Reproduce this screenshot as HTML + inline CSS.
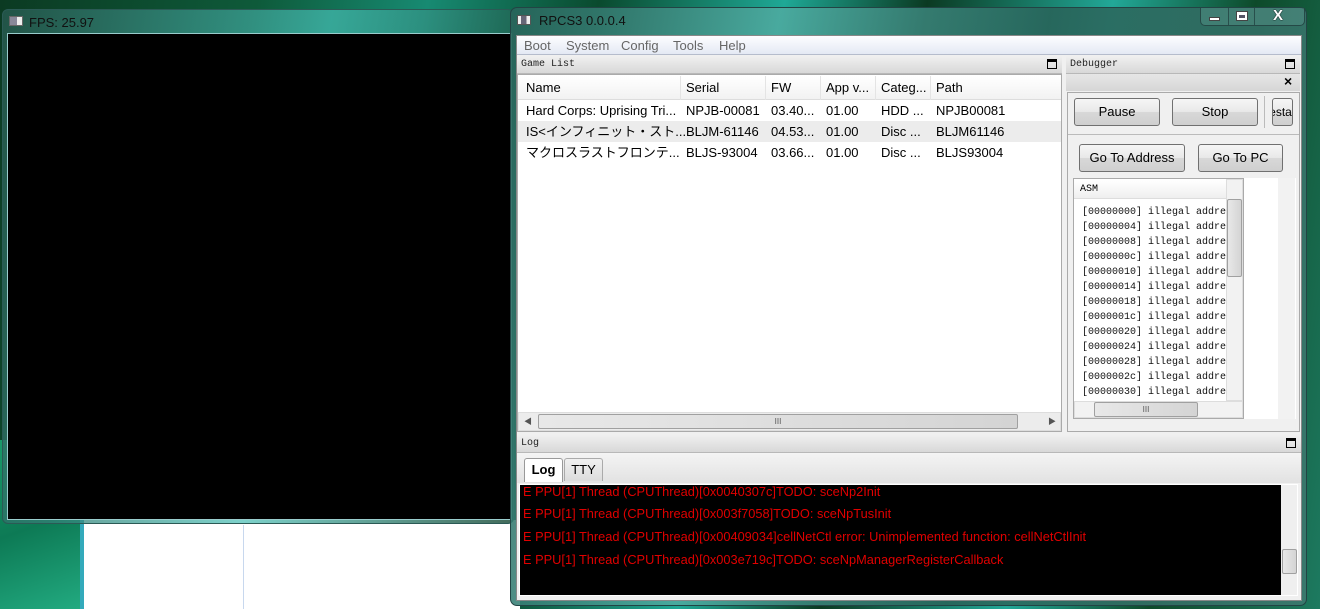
<!DOCTYPE html>
<html><head><meta charset="utf-8"><style>
*{box-sizing:border-box;margin:0;padding:0}
body{width:1320px;height:609px;overflow:hidden;position:relative;font-family:"Liberation Sans","Noto Sans CJK JP",sans-serif;font-size:13px;color:#000;
background:linear-gradient(100deg,#0b3a22 0%,#0e5a3a 18%,#178a72 30%,#0a4a2e 42%,#1fa896 55%,#0b3a22 65%,#22a898 78%,#0e4a2a 88%,#1d7a60 100%)}
.abs{position:absolute}
.dockhdr{background:linear-gradient(#f0f0f0,#d8d8d8);border-bottom:1px solid #b8b8b8;font-family:"Liberation Mono",monospace;font-size:10px;line-height:17px;padding-left:4px;color:#222}
.flt{position:absolute;right:5px;top:3px;width:10px;height:10px;border:1px solid #000;border-top-width:3px}
.btn{position:absolute;border:1px solid #707070;border-radius:3px;background:linear-gradient(#f6f6f6 0%,#e8e8e8 50%,#d8d8d8 51%,#cfcfcf 100%);text-align:center;font-size:13px}
.sb{position:absolute;background:#ececec;border:1px solid #ddd}
.thumb{position:absolute;background:linear-gradient(90deg,#e8e8e8,#d4d4d4);border:1px solid #a0a0a0;border-radius:2px}
.row{position:absolute;left:0;width:540px;height:21px;line-height:21px}
.row span{position:absolute;white-space:nowrap}
.asm{position:absolute;left:8px;font-family:"Liberation Mono","DejaVu Sans Mono",monospace;font-size:10px;white-space:nowrap;line-height:15px;color:#111}
.log{position:absolute;left:3px;color:#e00000;font-size:12.8px;white-space:nowrap}
</style></head><body>
<div class="abs" style="left:80px;top:520px;width:440px;height:89px;background:#fff;border-left:4px solid #3ab;"></div>
<div class="abs" style="left:243px;top:525px;width:1px;height:84px;background:#c8d8ee"></div>
<div class="abs" style="left:0;top:440px;width:80px;height:169px;background:linear-gradient(160deg,#1a9a6a,#0d7a55 50%,#22aa80)"></div>

<div class="abs" style="left:2px;top:9px;width:512px;height:515px;border:1px solid #2b5a55;border-radius:6px;background:linear-gradient(100deg,rgba(40,90,80,.8),rgba(70,190,180,.7) 55%,rgba(20,70,50,.8))"></div>
<div class="abs" style="left:9px;top:16px;width:14px;height:10px;border:1px solid #666;background:linear-gradient(90deg,#889 0 60%,#eee 60%)"></div>
<div class="abs" style="left:29px;top:15px;font-size:13px;color:#111">FPS: 25.97</div>
<div class="abs" style="left:7px;top:33px;width:505px;height:487px;background:#000;border:1px solid #9cc"></div>

<div class="abs" style="left:510px;top:7px;width:797px;height:599px;border:1px solid #244;border-radius:7px;background:linear-gradient(100deg,rgba(40,100,90,.9),rgba(80,170,160,.85) 30%,rgba(40,100,90,.9) 60%,rgba(60,120,110,.9))"></div>
<div class="abs" style="left:517px;top:15px;width:14px;height:10px;border:1px solid #555;background:linear-gradient(90deg,#eee 0 25%,#667 25% 70%,#eee 70%)"></div>
<div class="abs" style="left:539px;top:13px;font-size:13px;color:#111">RPCS3 0.0.0.4</div>
<div class="abs" style="left:1200px;top:8px;width:105px;height:18px;border:1px solid rgba(30,60,60,.8);border-top:none;border-radius:0 0 5px 5px;background:rgba(120,180,170,.25)"></div>
<div class="abs" style="left:1228px;top:8px;width:1px;height:17px;background:rgba(30,60,60,.7)"></div>
<div class="abs" style="left:1254px;top:8px;width:1px;height:17px;background:rgba(30,60,60,.7)"></div>
<div class="abs" style="left:1209px;top:17px;width:11px;height:4px;background:#fff;border:1px solid #444"></div>
<div class="abs" style="left:1236px;top:11px;width:12px;height:10px;border:1px solid #444;background:#fff;box-shadow:inset 0 0 0 2px #fff"><div style="margin:3px 2px;height:3px;background:#556"></div></div>
<div class="abs" style="left:1273px;top:7px;font-size:15px;font-weight:bold;color:#fff;text-shadow:0 0 1px #000,0 0 1px #000">X</div>

<div class="abs" style="left:516px;top:35px;width:786px;height:566px;background:#f0f0f0;border:1px solid #888"></div>
<div class="abs" style="left:517px;top:36px;width:784px;height:19px;background:linear-gradient(#fdfdff,#e4e9f4);border-bottom:1px solid #b5bccc"></div>
<div class="abs" style="top:38px;left:524px;color:#666">Boot</div>
<div class="abs" style="top:38px;left:566px;color:#666">System</div>
<div class="abs" style="top:38px;left:621px;color:#666">Config</div>
<div class="abs" style="top:38px;left:673px;color:#666">Tools</div>
<div class="abs" style="top:38px;left:719px;color:#666">Help</div>

<div class="abs dockhdr" style="left:517px;top:56px;width:545px;height:18px">Game List<div class="flt"></div></div>
<div class="abs" style="left:517px;top:74px;width:545px;height:358px;background:#fff;border:1px solid #aaa">
  <div class="abs" style="left:0;top:1px;width:543px;height:24px;background:linear-gradient(#fff,#f2f2f2);border-bottom:1px solid #ddd"></div>
  <div class="abs" style="left:162px;top:1px;width:1px;height:24px;background:#e4e4e4"></div>
  <div class="abs" style="left:247px;top:1px;width:1px;height:24px;background:#e4e4e4"></div>
  <div class="abs" style="left:302px;top:1px;width:1px;height:24px;background:#e4e4e4"></div>
  <div class="abs" style="left:357px;top:1px;width:1px;height:24px;background:#e4e4e4"></div>
  <div class="abs" style="left:412px;top:1px;width:1px;height:24px;background:#e4e4e4"></div>
  <div class="row" style="top:2px"><span style="left:8px">Name</span><span style="left:168px">Serial</span><span style="left:253px">FW</span><span style="left:308px">App v...</span><span style="left:363px">Categ...</span><span style="left:418px">Path</span></div>
  <div class="row" style="top:25px"><span style="left:8px">Hard Corps: Uprising Tri...</span><span style="left:168px">NPJB-00081</span><span style="left:253px">03.40...</span><span style="left:308px">01.00</span><span style="left:363px">HDD ...</span><span style="left:418px">NPJB00081</span></div>
  <div class="row" style="top:46px;background:#ececec;width:543px"><span style="left:8px">IS&lt;インフィニット・スト...</span><span style="left:168px">BLJM-61146</span><span style="left:253px">04.53...</span><span style="left:308px">01.00</span><span style="left:363px">Disc ...</span><span style="left:418px">BLJM61146</span></div>
  <div class="row" style="top:67px"><span style="left:8px">マクロスラストフロンテ...</span><span style="left:168px">BLJS-93004</span><span style="left:253px">03.66...</span><span style="left:308px">01.00</span><span style="left:363px">Disc ...</span><span style="left:418px">BLJS93004</span></div>
  <div class="sb" style="left:0;top:337px;width:543px;height:19px"></div>
  <div class="thumb" style="left:20px;top:339px;width:480px;height:15px;text-align:center;font-size:8px;line-height:13px;color:#555">III</div>
  <div class="abs" style="left:6px;top:341px;font-size:8px;color:#555">◀</div>
  <div class="abs" style="left:530px;top:341px;font-size:8px;color:#555">▶</div>
</div>

<div class="abs dockhdr" style="left:1066px;top:56px;width:234px;height:18px">Debugger<div class="flt"></div></div>
<div class="abs" style="left:1066px;top:74px;width:234px;height:17px;background:linear-gradient(#e6e6e6,#d6d6d6)"></div>
<div class="abs" style="left:1284px;top:73px;font-size:14px;font-weight:bold">×</div>
<div class="abs" style="left:1067px;top:92px;width:233px;height:340px;border:1px solid #aaa;background:#f0f0f0"></div>
<div class="btn" style="left:1074px;top:98px;width:86px;height:28px;line-height:26px">Pause</div>
<div class="btn" style="left:1172px;top:98px;width:86px;height:28px;line-height:26px">Stop</div>
<div class="abs" style="left:1264px;top:96px;width:1px;height:32px;background:#bbb"></div>
<div class="btn" style="left:1272px;top:98px;width:21px;height:28px;line-height:26px;overflow:hidden;font-size:12px;text-indent:-4px">esta</div>
<div class="abs" style="left:1068px;top:134px;width:231px;height:1px;background:#bbb"></div>
<div class="btn" style="left:1079px;top:144px;width:106px;height:28px;line-height:26px">Go To Address</div>
<div class="btn" style="left:1198px;top:144px;width:85px;height:28px;line-height:26px">Go To PC</div>
<div class="abs" style="left:1073px;top:178px;width:171px;height:241px;background:#fff;border:1px solid #aaa;overflow:hidden">
  <div class="abs" style="left:0;top:1px;width:152px;height:19px;background:linear-gradient(#fff,#efefef);border-bottom:1px solid #ddd;font-family:'Liberation Mono',monospace;font-size:10px;line-height:19px;padding-left:6px">ASM</div>
  <div class="asm" style="top:26px">[00000000] illegal addre</div>
  <div class="asm" style="top:41px">[00000004] illegal addre</div>
  <div class="asm" style="top:56px">[00000008] illegal addre</div>
  <div class="asm" style="top:71px">[0000000c] illegal addre</div>
  <div class="asm" style="top:86px">[00000010] illegal addre</div>
  <div class="asm" style="top:101px">[00000014] illegal addre</div>
  <div class="asm" style="top:116px">[00000018] illegal addre</div>
  <div class="asm" style="top:131px">[0000001c] illegal addre</div>
  <div class="asm" style="top:146px">[00000020] illegal addre</div>
  <div class="asm" style="top:161px">[00000024] illegal addre</div>
  <div class="asm" style="top:176px">[00000028] illegal addre</div>
  <div class="asm" style="top:191px">[0000002c] illegal addre</div>
  <div class="asm" style="top:206px">[00000030] illegal addre</div>
  <div class="sb" style="left:152px;top:0;width:17px;height:222px;background:#f2f2f2"></div>
  <div class="thumb" style="left:153px;top:20px;width:15px;height:78px"></div>
  <div class="sb" style="left:0;top:222px;width:169px;height:17px;background:#f2f2f2"></div>
  <div class="thumb" style="left:20px;top:223px;width:104px;height:15px;text-align:center;font-size:8px;line-height:13px;color:#555">III</div>
</div>
<div class="abs" style="left:1244px;top:178px;width:52px;height:241px;background:#fff"></div>
<div class="abs" style="left:1278px;top:178px;width:17px;height:241px;background:#f2f2f2"></div>

<div class="abs dockhdr" style="left:517px;top:435px;width:784px;height:18px">Log<div class="flt"></div></div>
<div class="abs" style="left:517px;top:453px;width:784px;height:30px;background:linear-gradient(#f4f4f4,#e2e2e2)"></div>
<div class="abs" style="left:524px;top:458px;width:39px;height:24px;background:#fff;border:1px solid #999;border-bottom:none;border-radius:3px 3px 0 0;font-weight:bold;text-align:center;line-height:22px">Log</div>
<div class="abs" style="left:564px;top:458px;width:39px;height:23px;background:linear-gradient(#f0f0f0,#dcdcdc);border:1px solid #aaa;border-bottom:none;border-radius:3px 3px 0 0;text-align:center;line-height:22px">TTY</div>
<div class="abs" style="left:519px;top:484px;width:779px;height:112px;background:#000;border:1px solid #fff;overflow:hidden">
  <div class="log" style="top:-1px">E PPU[1] Thread (CPUThread)[0x0040307c]TODO: sceNp2Init</div>
  <div class="log" style="top:21px">E PPU[1] Thread (CPUThread)[0x003f7058]TODO: sceNpTusInit</div>
  <div class="log" style="top:44px">E PPU[1] Thread (CPUThread)[0x00409034]cellNetCtl error: Unimplemented function: cellNetCtlInit</div>
  <div class="log" style="top:67px">E PPU[1] Thread (CPUThread)[0x003e719c]TODO: sceNpManagerRegisterCallback</div>
  <div class="abs" style="left:761px;top:0;width:17px;height:111px;background:#efefef"></div>
  <div class="thumb" style="left:762px;top:64px;width:15px;height:25px"></div>
</div>
</body></html>
